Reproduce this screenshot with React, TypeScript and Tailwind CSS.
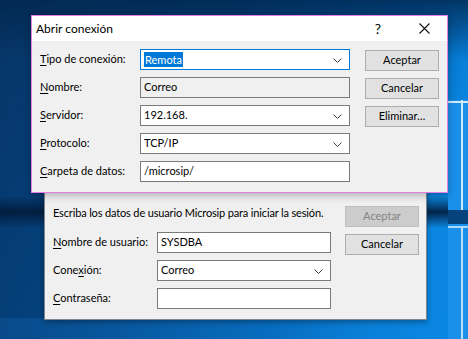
import React from 'react'

const font = { fontFamily: 'Lato, "Noto Sans", sans-serif' }

function Chevron() {
  return (
    <svg width="9" height="5" viewBox="0 0 9 5" className="absolute right-[7px] top-[8px]">
      <path d="M0.5 0.5 L4.5 4.5 L8.5 0.5" fill="none" stroke="#404040" strokeWidth="1" />
    </svg>
  )
}

function Mn({ children }: { children: React.ReactNode }) {
  return <span className="underline underline-offset-2 decoration-1">{children}</span>
}

function Field({
  children,
  combo,
  readOnly,
  focus,
  width,
}: {
  children?: React.ReactNode
  combo?: boolean
  readOnly?: boolean
  focus?: boolean
  width: string
}) {
  return (
    <div
      className={`relative h-[21px] ${width} shrink-0 border flex items-center pl-[3px] whitespace-nowrap ${
        focus ? 'border-[#0078d7] bg-white' : readOnly ? 'border-[#7a7a7a] bg-[#f0f0f0]' : 'border-[#7a7a7a] bg-white'
      }`}
    >
      {children}
      {combo && <Chevron />}
    </div>
  )
}

function Btn({ children, disabled }: { children: React.ReactNode; disabled?: boolean }) {
  return (
    <div
      className={`h-[21px] w-[74px] border flex items-center justify-center whitespace-nowrap ${
        disabled ? 'border-[#bfbfbf] bg-[#cccccc] text-[#838383]' : 'border-[#adadad] bg-[#e1e1e1] text-black'
      }`}
    >
      {children}
    </div>
  )
}

function Label({ children, width }: { children: React.ReactNode; width: string }) {
  return <div className={`${width} shrink-0 whitespace-nowrap`}>{children}</div>
}

function Wallpaper() {
  return (
    <svg className="absolute inset-0" width="468" height="339" viewBox="0 0 468 339">
      <defs>
        <linearGradient id="bg" x1="0" y1="0" x2="1" y2="0.3">
          <stop offset="0" stopColor="#073566" />
          <stop offset="0.45" stopColor="#034584" />
          <stop offset="0.8" stopColor="#0063b5" />
          <stop offset="1" stopColor="#0a86e0" />
        </linearGradient>
        <linearGradient id="top" x1="0" y1="0" x2="0" y2="1">
          <stop offset="0" stopColor="#01264d" stopOpacity="0.8" />
          <stop offset="1" stopColor="#01264d" stopOpacity="0" />
        </linearGradient>
        <linearGradient id="band" x1="0" y1="0" x2="0" y2="1">
          <stop offset="0" stopColor="#021a38" stopOpacity="0" />
          <stop offset="0.5" stopColor="#021a38" stopOpacity="0.9" />
          <stop offset="1" stopColor="#021a38" stopOpacity="0" />
        </linearGradient>
        <linearGradient id="bottom" x1="0" y1="0" x2="1" y2="0">
          <stop offset="0" stopColor="#0b4f92" />
          <stop offset="1" stopColor="#0a8ae8" />
        </linearGradient>
      </defs>
      <rect width="468" height="339" fill="url(#bg)" />
      <rect width="468" height="60" fill="url(#top)" />
      <rect y="318" width="468" height="21" fill="url(#bottom)" opacity="0.7" />
      <rect y="196" width="468" height="32" fill="url(#band)" />
      <rect x="448" y="100" width="20" height="239" fill="#1a90ea" />
      <rect x="448" y="210" width="20" height="14" fill="#06427c" />
      <rect x="461" y="100" width="2" height="110" fill="#cfeaff" />
      <rect x="461" y="226" width="2" height="113" fill="#b9e0ff" />
      <rect x="448" y="101" width="20" height="2" fill="#cfeaff" />
      <rect x="448" y="226" width="20" height="2" fill="#a9d8ff" />
    </svg>
  )
}

export default function App() {
  return (
    <div className="relative w-[468px] h-[339px] overflow-hidden text-[11px] text-black" style={font}>
      <Wallpaper />

      {/* Login dialog (behind) */}
      <div className="absolute left-[44px] top-[150px] w-[383px] h-[170px] bg-[#f0f0f0] border border-[#7d8791] shadow-[0_2px_6px_rgba(0,0,0,0.35)] flex flex-col">
        <div className="mt-[52px] flex">
          <div className="flex flex-col pl-[8px] w-[300px] shrink-0">
            <div className="h-[20px] flex items-center whitespace-nowrap tracking-[-0.15px]">
              Escriba los datos de usuario Microsip para iniciar la sesión.
            </div>
            <div className="mt-[9px] flex flex-col gap-[7px]">
              <div className="flex items-center">
                <Label width="w-[104px]">
                  <Mn>N</Mn>ombre de usuario:
                </Label>
                <Field width="w-[174px]">SYSDBA</Field>
              </div>
              <div className="flex items-center">
                <Label width="w-[104px]">
                  Cone<Mn>x</Mn>ión:
                </Label>
                <Field width="w-[174px]" combo>
                  Correo
                </Field>
              </div>
              <div className="flex items-center">
                <Label width="w-[104px]">
                  <Mn>C</Mn>ontraseña:
                </Label>
                <Field width="w-[174px]" />
              </div>
            </div>
          </div>
          <div className="flex flex-col gap-[7px] mt-[3px]">
            <Btn disabled>Aceptar</Btn>
            <Btn>Cancelar</Btn>
          </div>
        </div>
      </div>

      {/* Connection dialog (front) */}
      <div className="absolute left-[31px] top-[15px] w-[417px] h-[178px] border border-[#e37ee3] bg-[#f0f0f0] flex flex-col shadow-[0_2px_8px_rgba(0,0,0,0.3)]">
        <div className="h-[25px] bg-white flex items-center justify-between pl-[4px]">
          <span className="text-[12px]">Abrir conexión</span>
          <div className="flex items-center h-full">
            <span className="w-[46px] text-center text-[14px]">?</span>
            <div className="w-[46px] flex justify-center">
              <svg width="11" height="11" viewBox="0 0 11 11">
                <path d="M0.5 0.5 L10.5 10.5 M10.5 0.5 L0.5 10.5" stroke="#111" strokeWidth="1.1" />
              </svg>
            </div>
          </div>
        </div>
        <div className="flex pt-[8px] pl-[8px]">
          <div className="flex flex-col gap-[7px]">
            <div className="flex items-center">
              <Label width="w-[100px]">
                <Mn>T</Mn>ipo de conexión:
              </Label>
              <Field width="w-[210px]" combo focus>
                <span className="bg-[#0078d7] text-white leading-[15px] px-[1px]">Remota</span>
              </Field>
            </div>
            <div className="flex items-center">
              <Label width="w-[100px]">
                <Mn>N</Mn>ombre:
              </Label>
              <Field width="w-[210px]" readOnly>
                Correo
              </Field>
            </div>
            <div className="flex items-center">
              <Label width="w-[100px]">
                <Mn>S</Mn>ervidor:
              </Label>
              <Field width="w-[210px]" combo>
                192.168.
              </Field>
            </div>
            <div className="flex items-center">
              <Label width="w-[100px]">
                <Mn>P</Mn>rotocolo:
              </Label>
              <Field width="w-[210px]" combo>
                TCP/IP
              </Field>
            </div>
            <div className="flex items-center">
              <Label width="w-[100px]">
                <Mn>C</Mn>arpeta de datos:
              </Label>
              <Field width="w-[210px]">/microsip/</Field>
            </div>
          </div>
          <div className="ml-[15px] mt-[1px] flex flex-col gap-[7px]">
            <Btn>Aceptar</Btn>
            <Btn>Cancelar</Btn>
            <Btn>Eliminar…</Btn>
          </div>
        </div>
      </div>
    </div>
  )
}
